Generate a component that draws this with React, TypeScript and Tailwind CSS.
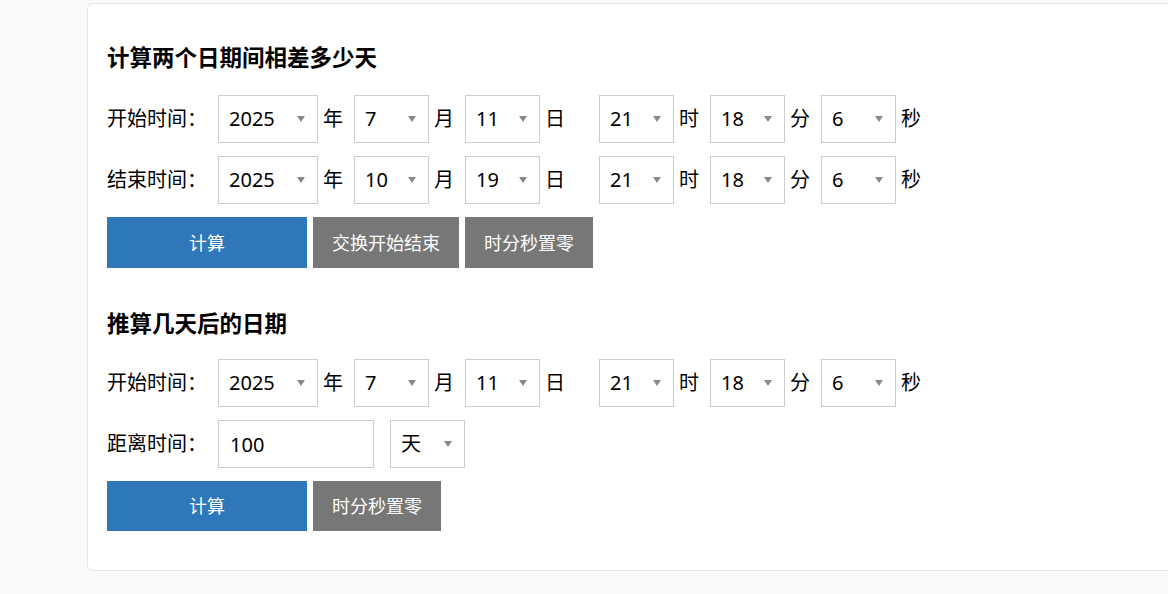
import React from "react";

const font = { fontFamily: '"Noto Sans", "Noto Sans CJK SC", sans-serif' };

function range(a: number, b: number) {
  return Array.from({ length: b - a + 1 }, (_, i) => String(a + i));
}

function Select({ value, options, w }: { value: string; options: string[]; w: string }) {
  return (
    <div className={`relative h-[48px] ${w} shrink-0`}>
      <select
        defaultValue={value}
        className="h-full w-full appearance-none rounded-none border border-[#cccccc] bg-white pl-[10px] text-[20px] leading-none text-black outline-none"
        style={font}
      >
        {options.map((o) => (
          <option key={o} value={o}>
            {o}
          </option>
        ))}
      </select>
      <span className="pointer-events-none absolute right-[13px] top-1/2 h-0 w-0 -translate-y-1/2 border-x-[4.5px] border-t-[6px] border-x-transparent border-t-[#888888]" />
    </div>
  );
}

function Unit({ children, extra }: { children: string; extra?: boolean }) {
  return (
    <span className={`ml-[5px] w-[20px] shrink-0 text-[20px] leading-none ${extra ? "mr-[34px]" : "mr-[11px]"}`}>
      {children}
    </span>
  );
}

function DateRow({ label, y, m, d, h, mi, s }: { label: string; y: string; m: string; d: string; h: string; mi: string; s: string }) {
  return (
    <div className="flex h-[48px] items-center">
      <span className="w-[111px] shrink-0 text-[20px] leading-none">{label}</span>
      <Select value={y} options={range(1970, 2050)} w="w-[100px]" />
      <Unit>年</Unit>
      <Select value={m} options={range(1, 12)} w="w-[75px]" />
      <Unit>月</Unit>
      <Select value={d} options={range(1, 31)} w="w-[75px]" />
      <Unit extra>日</Unit>
      <Select value={h} options={range(0, 23)} w="w-[75px]" />
      <Unit>时</Unit>
      <Select value={mi} options={range(0, 59)} w="w-[75px]" />
      <Unit>分</Unit>
      <Select value={s} options={range(0, 59)} w="w-[75px]" />
      <Unit>秒</Unit>
    </div>
  );
}

function Btn({ children, blue, h }: { children: string; blue?: boolean; h: string }) {
  return (
    <button
      className={`${h} text-[18px] leading-none text-white ${blue ? "w-[200px] bg-[#2e77b8]" : "bg-[#777777] px-[19px]"}`}
      style={font}
    >
      {children}
    </button>
  );
}

export default function App() {
  return (
    <div className="h-screen overflow-hidden bg-[#fafafa] pt-[3px] pl-[87px] text-black" style={font}>
      <div className="w-[1100px] rounded-md border border-[#e5e5e5] bg-white pt-[37px] pb-[39px] pl-[19px]">
        <h3 className="mb-[20px] text-[22.5px] font-bold leading-[34px]">计算两个日期间相差多少天</h3>
        <div className="flex flex-col gap-[13px]">
          <DateRow label="开始时间：" y="2025" m="7" d="11" h="21" mi="18" s="6" />
          <DateRow label="结束时间：" y="2025" m="10" d="19" h="21" mi="18" s="6" />
          <div className="flex gap-[6px]">
            <Btn blue h="h-[51px]">计算</Btn>
            <Btn h="h-[51px]">交换开始结束</Btn>
            <Btn h="h-[51px]">时分秒置零</Btn>
          </div>
        </div>

        <h3 className="mt-[39px] mb-[18px] text-[22.5px] font-bold leading-[34px]">推算几天后的日期</h3>
        <div className="flex flex-col gap-[13px]">
          <DateRow label="开始时间：" y="2025" m="7" d="11" h="21" mi="18" s="6" />
          <div className="flex h-[48px] items-center">
            <span className="w-[111px] shrink-0 text-[20px] leading-none">距离时间：</span>
            <input
              defaultValue="100"
              className="h-[48px] w-[156px] border border-[#cccccc] bg-white pl-[11px] text-[20px] outline-none"
              style={font}
            />
            <div className="ml-[16px]">
              <Select value="天" options={["天", "时", "分", "秒"]} w="w-[75px]" />
            </div>
          </div>
          <div className="flex gap-[6px]">
            <Btn blue h="h-[50px]">计算</Btn>
            <Btn h="h-[50px]">时分秒置零</Btn>
          </div>
        </div>
      </div>
    </div>
  );
}
